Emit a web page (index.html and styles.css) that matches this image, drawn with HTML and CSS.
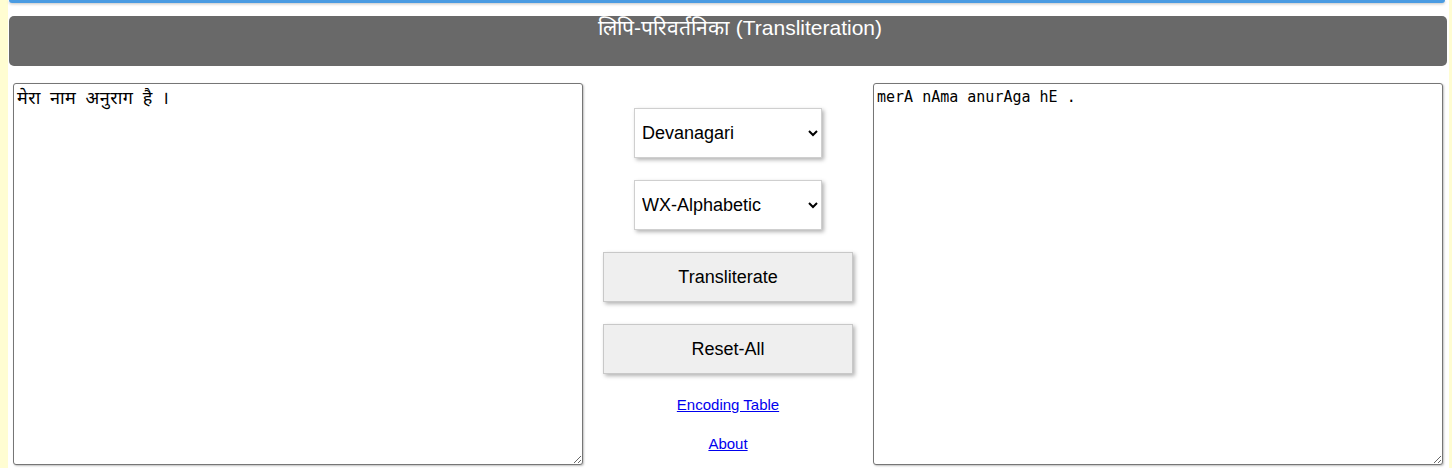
FILE: index.html
```html
<!DOCTYPE html>
<html lang="hi">
<head>
<meta charset="utf-8">
<title>लिपि-परिवर्तनिका</title>
<link rel="stylesheet" href="styles.css">
</head>
<body>
<div class="page">
  <div class="topbar"></div>
  <div class="header">लिपि-परिवर्तनिका (Transliteration)</div>
  <div class="main">
    <textarea class="box box-in">मेरा नाम अनुराग है ।</textarea>
    <div class="controls">
      <select class="sel">
        <option>Devanagari</option>
      </select>
      <select class="sel">
        <option>WX-Alphabetic</option>
      </select>
      <button class="btn">Transliterate</button>
      <button class="btn">Reset-All</button>
      <a class="link link-enc" href="#">Encoding Table</a>
      <a class="link link-about" href="#">About</a>
    </div>
    <textarea class="box box-out">merA nAma anurAga hE .</textarea>
  </div>
</div>
</body>
</html>
```
FILE: styles.css
```css
html, body {
  margin: 0;
  padding: 0;
}
body {
  background: #fffdd2;
  font-family: "Liberation Sans", Arial, sans-serif;
  height: 468px;
  overflow: hidden;
}
.page {
  margin: 0 3px 0 8px;
  background: #fff;
  height: 468px;
  padding: 0 2px 0 1px;
  box-sizing: border-box;
}
.topbar {
  height: 3px;
  background: #4a9be2;
  border-radius: 0 0 4px 4px;
  box-shadow: 0 1px 3px rgba(0, 0, 0, 0.25);
  margin-right: 2px;
}
.header {
  margin-top: 13px;
  height: 50px;
  background: #696969;
  border-radius: 5px;
  color: #fff;
  font-size: 21px;
  line-height: 24px;
  text-align: center;
  padding-left: 24px;
  box-sizing: border-box;
  word-spacing: 1px;
}
.main {
  display: flex;
  margin-top: 17px;
  padding-left: 4px;
  align-items: flex-start;
}
.box {
  width: 570px;
  height: 382px;
  box-sizing: border-box;
  margin: 0;
  border: 1px solid #767676;
  border-radius: 3px;
  box-shadow: 1px 1px 2px rgba(0, 0, 0, 0.25);
  resize: both;
  padding: 2px 3px;
  color: #000;
  background: #fff;
}
.box-in {
  font-family: "Noto Sans", "Liberation Serif", serif;
  font-size: 18px;
  line-height: 22px;
  word-spacing: 4px;
  letter-spacing: 0.5px;
}
.box-out {
  font-family: "DejaVu Sans Mono", "Liberation Mono", monospace;
  font-size: 15px;
  line-height: 18px;
  padding-top: 4px;
}
.controls {
  width: 290px;
  display: flex;
  flex-direction: column;
  align-items: center;
  padding-top: 25px;
}
.sel {
  width: 188px;
  height: 50px;
  margin: 0 0 22px 0;
  background: #fff;
  border: 1px solid #cfcfcf;
  border-radius: 0;
  box-shadow: 2px 2px 4px rgba(0, 0, 0, 0.3);
  font-family: "Liberation Sans", Arial, sans-serif;
  font-size: 18px;
  color: #000;
  padding: 0 3px;
}
.btn {
  width: 250px;
  height: 50px;
  margin: 0 0 22px 0;
  background: #efefef;
  border: 1px solid #c8c8c8;
  box-shadow: 2px 2px 4px rgba(0, 0, 0, 0.3);
  font-family: "Liberation Sans", Arial, sans-serif;
  font-size: 18px;
  color: #000;
}
.btn + .btn {
  margin-bottom: 22px;
}
.link {
  font-size: 15px;
  line-height: 18px;
  color: #0000ee;
  text-decoration: underline;
}
.link-about {
  margin-top: 21px;
}
```
